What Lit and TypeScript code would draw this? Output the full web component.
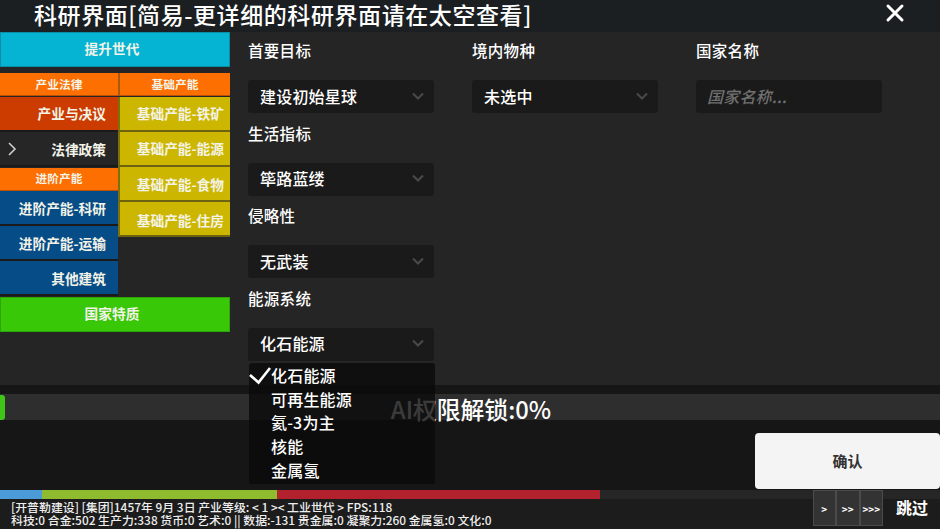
import { LitElement, html, css } from "lit";
import { customElement } from "lit/decorators.js";

const chev = html`<svg class="chev" width="14" height="14" viewBox="0 0 14 14"><path d="M2 4.5 L7 9.5 L12 4.5" fill="none" stroke="#4a4a4a" stroke-width="2"/></svg>`;

@customElement("app-root")
export class AppRoot extends LitElement {
  static styles = css`
    :host { display: block; width: 940px; height: 529px; overflow: hidden; position: relative; background: #252525; color: #fff;
      font-family: "Noto Sans CJK SC", "Noto Sans", sans-serif; font-weight: 500; }
    * { box-sizing: border-box; }
    .page { display: flex; flex-direction: column; height: 529px; }
    .head { height: 32px; flex: none; background: #1b1f22; display: flex; align-items: center; justify-content: space-between; padding: 0 35px 0 34px; }
    .title { font-size: 23px; line-height: 28px; font-weight: 500; white-space: nowrap; letter-spacing: 0.58px; margin-bottom: 4px; }
    .x { margin-bottom: 6px; }
    .main { flex: none; height: 353px; display: flex; }
    .left { flex: none; width: 231px; display: flex; flex-direction: column; }
    .btn { display: flex; align-items: center; justify-content: center; font-size: 12px; color: #f3f3e8; font-weight: 700; }
    .wide { height: 35px; width: 230px; font-size: 13.7px; padding: 0 6px 3px 0; }
    .cyan { background: #05b3d2; border: 1px solid #0a8ea8; }
    .green { background: #39c808; border: 1px solid #2ea50a; margin-top: 1px; }
    .cols { display: grid; grid-template-columns: 118px 112px; margin-top: 6px; }
    .col { display: flex; flex-direction: column; }
    .cat { background: #fd6f00; height: 23px; font-size: 11.7px; border-bottom: 1px solid #b85000; justify-content: center; margin-bottom: 1px; padding-bottom: 2px; }
    .cat.mid { margin-bottom: 0; margin-top: 1px; padding-bottom: 4px; }
    .cat.r { border-left: 2px solid #a85a10; }
    .item { height: 35px; font-size: 13.7px; justify-content: flex-end; padding-right: 12px; border-bottom: 2px solid #1a1a1a; position: relative; }
    .red { background: #cc3c00; padding-bottom: 2px; }
    .dark { background: #262626; }
    .blue { background: #064d87; }
    .gold { background: #cdb600; border-bottom: 2px solid #6d6210; border-left: 2px solid #7d700c; padding-right: 6px; }
    .up { padding-bottom: 2px; }
    .down { padding-top: 2px; }
    .arrow { position: absolute; left: 7px; top: 10px; }
    .form { flex: 1; padding: 8px 0 0 17px; position: relative; display: grid; grid-template-columns: 224px 224px 190px; align-content: start; }
    .field { display: flex; flex-direction: column; }
    .label { font-size: 15.5px; line-height: 21px; height: 40px; letter-spacing: 0.3px; }
    .select { width: 186px; height: 33px; background: #1a1a1a; border-radius: 3px; display: flex; align-items: center; justify-content: space-between; padding: 0 9px 2px 12px; font-size: 16px; letter-spacing: 0.2px; margin-bottom: 9.5px; }
    .input { font-style: italic; color: #707070; font-size: 16px; padding-left: 11px; }
    .lower { flex: 1; position: relative; background: #161616; display: flex; flex-direction: column; }
    .band { height: 9px; flex: none; }
    .track { height: 26px; flex: none; background: #2e2e2e; position: relative; display: flex; align-items: center; justify-content: center; font-size: 23.8px; padding: 3px 0 0 2px; }
    .fill { position: absolute; left: 0; top: 1px; bottom: 0; width: 5px; background: #3fc51a; border-radius: 0 3px 3px 0; }
    .actions { flex: 1; display: flex; justify-content: flex-end; align-items: flex-start; padding-top: 13px; }
    .confirm { width: 185px; height: 56px; background: #f4f4f4; color: #333; border-radius: 4px; display: flex; align-items: center; justify-content: center; font-size: 15px; font-weight: 700; padding-bottom: 2px; }
    .menu { position: absolute; left: 249px; top: 363px; width: 186px; height: 121px; background: rgba(10,10,10,.8); border-radius: 3px; font-size: 16px; line-height: 23.7px; letter-spacing: 0.2px; padding: 1px 0 0 22px; }
    .check { position: absolute; left: 0; top: 4px; }
    .foot { height: 39px; flex: none; background: #1c1c1c; position: relative; }
    .bar { height: 9px; display: flex; background: #262626; }
    .bar i { display: block; height: 100%; }
    .status { position: absolute; left: 11px; top: 9.5px; font-size: 11.9px; line-height: 13px; color: #eee; white-space: nowrap; }
    .speed { position: absolute; right: 57px; top: 0; display: flex; }
    .speed span { width: 23.5px; height: 36px; background: #333; border: 1px solid #4b4b4b; font-size: 10px; display: flex; align-items: center; justify-content: center; font-weight: 700; }
    .skip { position: absolute; right: 12px; top: 6px; font-size: 16px; line-height: 22px; font-weight: 700; }
  `;

  private sel(t: string) {
    return html`<div class="select"><span>${t}</span>${chev}</div>`;
  }

  render() {
    return html`<div class="page">
      <div class="head">
        <div class="title">科研界面[简易-更详细的科研界面请在太空查看]</div>
        <svg class="x" width="20" height="20" viewBox="0 0 20 20"><path d="M3 3 L17 17 M17 3 L3 17" stroke="#fff" stroke-width="3" stroke-linecap="round"/></svg>
      </div>
      <div class="main">
        <div class="left">
          <div class="btn wide cyan">提升世代</div>
          <div class="cols">
            <div class="col">
              <div class="btn cat">产业法律</div>
              <div class="btn item red">产业与决议</div>
              <div class="btn item dark"><svg class="arrow" width="10" height="14" viewBox="0 0 10 14"><path d="M2 1 L8 7 L2 13" fill="none" stroke="#ccc" stroke-width="1.6"/></svg>法律政策</div>
              <div class="btn cat mid">进阶产能</div>
              <div class="btn item blue">进阶产能-科研</div>
              <div class="btn item blue">进阶产能-运输</div>
              <div class="btn item blue">其他建筑</div>
            </div>
            <div class="col">
              <div class="btn cat r">基础产能</div>
              <div class="btn item gold up">基础产能-铁矿</div>
              <div class="btn item gold up">基础产能-能源</div>
              <div class="btn item gold">基础产能-食物</div>
              <div class="btn item gold down">基础产能-住房</div>
            </div>
          </div>
          <div class="btn wide green">国家特质</div>
        </div>
        <div class="form">
          <div class="field">
            <div class="label">首要目标</div>${this.sel("建设初始星球")}
            <div class="label">生活指标</div>${this.sel("筚路蓝缕")}
            <div class="label">侵略性</div>${this.sel("无武装")}
            <div class="label">能源系统</div>${this.sel("化石能源")}
          </div>
          <div class="field">
            <div class="label">境内物种</div>${this.sel("未选中")}
          </div>
          <div class="field">
            <div class="label">国家名称</div>
            <div class="select input"><span>国家名称...</span></div>
          </div>
        </div>
      </div>
      <div class="lower">
        <div class="band"></div>
        <div class="track"><div class="fill"></div>AI权限解锁:0%</div>
        <div class="actions"><div class="confirm">确认</div></div>
      </div>
      <div class="foot">
        <div class="bar"><i style="width:42px;background:#4a9bd8"></i><i style="width:235px;background:#8fbb2f"></i><i style="width:323px;background:#b3202e"></i></div>
        <div class="status">[开普勒建设] [集团]1457年 9月 3日 产业等级: &lt; 1 &gt;&lt; 工业世代 &gt; FPS:118<br>科技:0 合金:502 生产力:338 货币:0 艺术:0 || 数据:-131 贵金属:0 凝聚力:260 金属氢:0 文化:0</div>
        <div class="speed"><span>&gt;</span><span>&gt;&gt;</span><span>&gt;&gt;&gt;</span></div>
        <div class="skip">跳过</div>
      </div>
      <div class="menu">
        <svg class="check" width="22" height="18" viewBox="0 0 22 18"><path d="M1 8 L9.5 15.5 L21 1" fill="none" stroke="#fff" stroke-width="2.6"/></svg>
        化石能源<br>可再生能源<br>氦-3为主<br>核能<br>金属氢
      </div>
    </div>`;
  }
}
